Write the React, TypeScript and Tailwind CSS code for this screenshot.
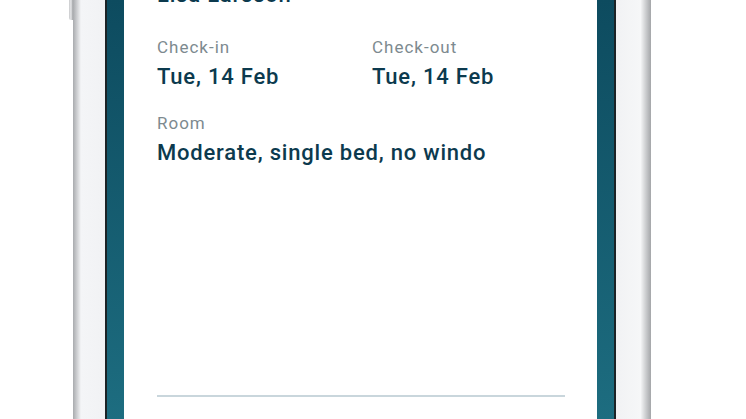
import React from "react";

export default function App() {
  const font = { fontFamily: "Roboto, 'Noto Sans', sans-serif" };
  return (
    <div className="w-[746px] h-[419px] bg-white overflow-hidden flex" style={font}>
      <div className="w-[69px] shrink-0" />
      {/* side button */}
      <div className="w-[4px] shrink-0 flex flex-col">
        <div className="h-[20px] bg-linear-to-r from-[#c9cacc] via-[#e6e7e9] to-[#9fa1a4] rounded-bl-[2px]" />
      </div>
      {/* left frame */}
      <div className="w-[32px] shrink-0 bg-linear-to-r from-[#a9abae] via-[#f4f5f7] via-25% to-[#f1f2f4]" />
      <div className="w-[2px] shrink-0 bg-[#1b2326]" />
      {/* screen */}
      <div className="w-[507px] shrink-0 flex bg-linear-to-b from-[#0d4b5f] to-[#1d6d80]">
        <div className="w-[17px] shrink-0" />
        <div className="flex-1 bg-white flex flex-col">
          <div className="pl-[33px] pr-[32px] flex flex-col flex-1">
            <div className="mt-[-19px] text-[22px] leading-[28px] tracking-[0.8px] font-medium text-[#0c3a4e]">Lisa Larsson</div>
            <div className="flex mt-[28px]">
              <div className="w-[215px]">
                <div className="text-[17px] leading-[20px] tracking-[1px] text-[#7d8a8f]">Check-in</div>
                <div className="text-[22px] leading-[28px] mt-[6px] tracking-[0.8px] font-medium text-[#0c3a4e]">Tue, 14 Feb</div>
              </div>
              <div>
                <div className="text-[17px] leading-[20px] tracking-[1px] text-[#7d8a8f]">Check-out</div>
                <div className="text-[22px] leading-[28px] mt-[6px] tracking-[0.8px] font-medium text-[#0c3a4e]">Tue, 14 Feb</div>
              </div>
            </div>
            <div className="mt-[22px] text-[17px] leading-[20px] tracking-[1px] text-[#7d8a8f]">Room</div>
            <div className="text-[22px] leading-[28px] mt-[6px] tracking-[0.8px] font-medium text-[#0c3a4e] whitespace-nowrap">Moderate, single bed, no windo</div>
            <div className="flex-1" />
            <div className="h-[2px] bg-[#c9d6dc] mb-[22px]" />
          </div>
        </div>
        <div className="w-[17px] shrink-0" />
      </div>
      <div className="w-[2px] shrink-0 bg-[#1b2326]" />
      {/* right frame */}
      <div className="w-[35px] shrink-0 bg-linear-to-r from-[#f1f2f4] via-[#f6f7f8] via-70% to-[#a4a6a9]" />
    </div>
  );
}
